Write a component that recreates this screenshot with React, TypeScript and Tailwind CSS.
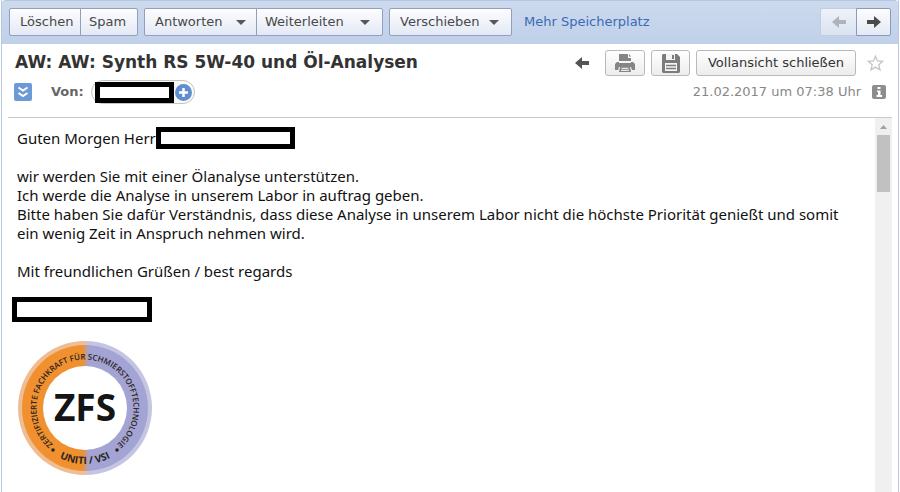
import type { ReactNode } from 'react';
import clsx from 'clsx';

const UI_FONT = "font-['Verdana','DejaVu_Sans',sans-serif]";
const MAIL_FONT = "font-['Noto_Sans',sans-serif]";

interface ToolButtonProps {
  children: ReactNode;
  className?: string;
  menu?: boolean;
}

function ToolButton({ children, className, menu }: ToolButtonProps) {
  return (
    <button
      type="button"
      className={clsx(
        'flex h-7 items-center border border-[#93a0bb] bg-linear-to-b from-[#fdfdff] to-[#e3e9f5] text-[13px] text-[#484848]',
        className,
      )}
    >
      {children}
      {menu && (
        <svg width="10" height="5" viewBox="0 0 10 5" className="ml-auto" aria-hidden="true">
          <path d="M0 0h10L5 5z" fill="#585858" />
        </svg>
      )}
    </button>
  );
}

function ArrowIcon({ color, left, className }: { color: string; left?: boolean; className?: string }) {
  return (
    <svg width="14" height="12" viewBox="0 0 14 12" className={className} aria-hidden="true">
      <path
        d="M0 4h7V0l7 6-7 6V8H0z"
        fill={color}
        transform={left ? 'matrix(-1 0 0 1 14 0)' : undefined}
      />
    </svg>
  );
}

function Toolbar() {
  return (
    <nav className="flex h-11 shrink-0 items-center rounded-t-sm border-t border-[#b3c5e0] bg-linear-to-b from-[#cddaee] to-[#bfd0e9] px-[7px] pb-px">
      <div className="flex">
        <ToolButton className="w-[72px] rounded-l-xs px-[10px]">Löschen</ToolButton>
        <ToolButton className="-ml-px w-[58px] rounded-r-xs px-2">Spam</ToolButton>
      </div>
      <div className="ml-[6px] flex">
        <ToolButton menu className="w-[113px] rounded-l-xs px-[10px]">
          Antworten
        </ToolButton>
        <ToolButton menu className="-ml-px w-[127px] rounded-r-xs pr-3 pl-2">
          Weiterleiten
        </ToolButton>
      </div>
      <ToolButton menu className="ml-[6px] w-[123px] rounded-xs pr-3 pl-[10px]">
        Verschieben
      </ToolButton>
      <a href="#speicher" className="ml-3 text-[13px] text-[#3a6ab5]">
        Mehr Speicherplatz
      </a>
      <div className="ml-auto flex">
        <button
          type="button"
          disabled
          aria-label="Vorherige E-Mail"
          className="flex h-7 w-9 items-center justify-center rounded-l-xs border border-r-0 border-[#c3cde0] bg-linear-to-b from-[#eef2fa] to-[#dbe3f1]"
        >
          <ArrowIcon left color="#b0b3ba" />
        </button>
        <button
          type="button"
          aria-label="Nächste E-Mail"
          className="flex h-7 w-[35px] items-center justify-center rounded-r-xs border border-[#8e9ab4] bg-linear-to-b from-[#fdfdff] to-[#e3e9f5]"
        >
          <ArrowIcon color="#4a4a4a" />
        </button>
      </div>
    </nav>
  );
}

const ACTION_BUTTON =
  'flex h-[26px] items-center justify-center rounded-[3px] border border-[#b9b9b9] bg-linear-to-b from-white to-[#ececec]';

function MailHeader() {
  return (
    <header className="mx-[6px] shrink-0 border-b border-[#c9cacb] pt-[6px] pb-[13px]">
      <div className="flex h-[26px] items-center pr-2 pl-[7px]">
        <h1 className="text-[17px] font-bold text-[#333]">AW: AW: Synth RS 5W-40 und Öl-Analysen</h1>
        <button type="button" aria-label="Antworten" className="mr-4 ml-auto">
          <ArrowIcon left color="#555" />
        </button>
        <button type="button" aria-label="Drucken" className={clsx(ACTION_BUTTON, 'mr-[6px] w-10')}>
          <svg width="20" height="20" viewBox="0 0 20 20" aria-hidden="true">
            <path d="M4 1h9v4h3v3H4z" fill="#858585" />
            <path d="M14 1l2 2.500h-2z" fill="#858585" />
            <path d="M2 9h2v1h12V9h2l2 2v6h-3l-1-3H4l-1 3H0v-6z" fill="#858585" />
            <path d="M5 14h10l1 5H4z" fill="#858585" />
            <path d="M6.500 15.300h7M6 17.300h8" stroke="#fff" strokeWidth="1" />
          </svg>
        </button>
        <button type="button" aria-label="Speichern" className={clsx(ACTION_BUTTON, 'mr-[6px] w-[39px]')}>
          <svg width="18" height="19" viewBox="0 0 18 19" aria-hidden="true">
            <path d="M1 0h14l3 3v15l-1 1H1l-1-1V1z" fill="#7b7b7b" />
            <path d="M4 0h9v6H4z" fill="#f4f4f4" />
            <path d="M10 1h2v4h-2z" fill="#7b7b7b" />
            <path d="M3 9h12v8H3z" fill="#f4f4f4" />
            <path d="M4 11.500h10M4 14.500h10" stroke="#7b7b7b" strokeWidth="1.500" />
          </svg>
        </button>
        <button type="button" className={clsx(ACTION_BUTTON, 'w-40 text-[13px] text-[#333]')}>
          Vollansicht schließen
        </button>
        <button type="button" aria-label="Als wichtig markieren" className="ml-[11px]">
          <svg width="17" height="16" viewBox="0 0 17 16" aria-hidden="true">
            <path
              d="M8.500 1.200l2 4.700 5.300.400-4 3.500 1.200 5-4.500-2.700L4 14.800l1.200-5-4-3.500 5.300-.400z"
              fill="none"
              stroke="#c4c4c4"
              strokeWidth="1.300"
            />
          </svg>
        </button>
      </div>

      <div className="mt-1 flex h-6 items-center pr-[6px] pl-[6px]">
        <button type="button" aria-label="Details anzeigen">
          <svg width="18" height="18" viewBox="0 0 18 18" aria-hidden="true">
            <rect width="18" height="18" rx="2" fill="#6c9ad6" />
            <path d="M4.500 4.500L9 7.500l4.500-3M4.500 10L9 13l4.500-3" fill="none" stroke="#fff" strokeWidth="2" />
          </svg>
        </button>
        <span className="ml-[19px] text-[13px] font-bold text-[#666]">Von:</span>
        <span className="ml-[7px] flex h-6 items-center rounded-full border border-[#c4c4c4] bg-[#fafafa] pr-[2px] pl-[3px]">
          <span className="h-[21px] w-[79px] border-5 border-black bg-white" />
          <button type="button" aria-label="Kontakt hinzufügen" className="ml-px">
            <svg width="17" height="17" viewBox="0 0 17 17" aria-hidden="true">
              <circle cx="8.500" cy="8.500" r="8.500" fill="#5f8fd0" />
              <path d="M8.500 4v9M4 8.500h9" stroke="#fff" strokeWidth="2.500" />
            </svg>
          </button>
        </span>
        <time dateTime="2017-02-21T07:38" className="ml-auto text-[13px] text-[#888]">
          21.02.2017 um 07:38 Uhr
        </time>
        <button type="button" aria-label="Informationen" className="ml-[11px]">
          <svg width="14" height="14" viewBox="0 0 14 14" aria-hidden="true">
            <rect width="14" height="14" rx="2" fill="#8d8d8d" />
            <path d="M5.500 2h3v2h-3zM5 5.500h3.500v4.500H10v2H4.500v-2H6v-3H5z" fill="#fff" />
          </svg>
        </button>
      </div>
    </header>
  );
}

function ZfsSeal() {
  return (
    <svg
      width="136"
      height="136"
      viewBox="0 0 136 136"
      role="img"
      aria-label="ZFS Siegel"
      className="font-['Open_Sans',sans-serif]"
    >
      <defs>
        <linearGradient id="ring" x1="0" x2="1" y1="0" y2="0">
          <stop offset="0.480" stopColor="#f0902f" />
          <stop offset="0.530" stopColor="#a3a4d3" />
        </linearGradient>
        <linearGradient id="rim" x1="0" x2="1" y1="0" y2="0">
          <stop offset="0.480" stopColor="#f0bd92" />
          <stop offset="0.530" stopColor="#c3c5e2" />
        </linearGradient>
        <path id="arc-top" d="M68 116.500a48.500 48.500 0 0 1 0-97a48.500 48.500 0 0 1 0 97" />
        <path id="arc-bottom" d="M12 68a56 56 0 0 0 112 0" />
      </defs>
      <circle cx="68" cy="68" r="67" fill="url(#rim)" />
      <circle cx="68" cy="68" r="63" fill="url(#ring)" />
      <circle cx="68" cy="68" r="42" fill="#fff" />
      <text fontSize="8" fontWeight="600" fill="#2a2320" textAnchor="middle">
        <textPath href="#arc-top" startOffset="50%">
          ZERTIFIZIERTE FACHKRAFT FÜR SCHMIERSTOFFTECHNOLOGIE
        </textPath>
      </text>
      <text fontSize="10" fontWeight="700" fill="#2a2320" textAnchor="middle">
        <textPath href="#arc-bottom" startOffset="50%">
          UNITI / VSI
        </textPath>
      </text>
      <circle cx="36" cy="110" r="1.800" fill="#2a2320" />
      <circle cx="100" cy="110" r="1.800" fill="#2a2320" />
      <text x="68" y="81" fontSize="37" fontWeight="700" fill="#151515" textAnchor="middle">
        ZFS
      </text>
    </svg>
  );
}

function Scrollbar() {
  return (
    <div className="flex w-[17px] shrink-0 flex-col items-center bg-[#f0f0f0]" aria-hidden="true">
      <svg width="17" height="17" viewBox="0 0 17 17">
        <path d="M5 11h7L8.500 7z" fill="#a0a0a0" />
      </svg>
      <div className="h-[57px] w-[13px] bg-[#c1c1c1]" />
    </div>
  );
}

function MailBody() {
  return (
    <div className="mx-[6px] flex min-h-0 flex-1">
      <article className={clsx('min-w-0 flex-1 overflow-hidden pt-[9px] pl-1 text-[15px] leading-[19px] text-[#111]', MAIL_FONT)}>
        <p className="flex items-center pl-[5px]">
          Guten Morgen Herr
          <span className="h-[22px] w-[139px] border-5 border-black bg-white" />
        </p>
        <p className="mt-[18px] pr-6 pl-[5px]">
          wir werden Sie mit einer Ölanalyse unterstützen.
          <br />
          Ich werde die Analyse in unserem Labor in auftrag geben.
          <br />
          Bitte haben Sie dafür Verständnis, dass diese Analyse in unserem Labor nicht die höchste Priorität genießt und somit
          ein wenig Zeit in Anspruch nehmen wird.
        </p>
        <p className="mt-[19px] pl-[5px]">Mit freundlichen Grüßen / best regards</p>
        <div className="mt-4 h-[25px] w-[140px] border-5 border-black bg-white" />
        <div className="mt-[18px] pl-[5px]">
          <ZfsSeal />
        </div>
      </article>
      <Scrollbar />
    </div>
  );
}

export default function App() {
  return (
    <div className={clsx('h-screen overflow-hidden bg-white px-px', UI_FONT)}>
      <main className="flex h-full flex-col border-x border-[#b9c9e0]">
        <Toolbar />
        <MailHeader />
        <MailBody />
      </main>
    </div>
  );
}
